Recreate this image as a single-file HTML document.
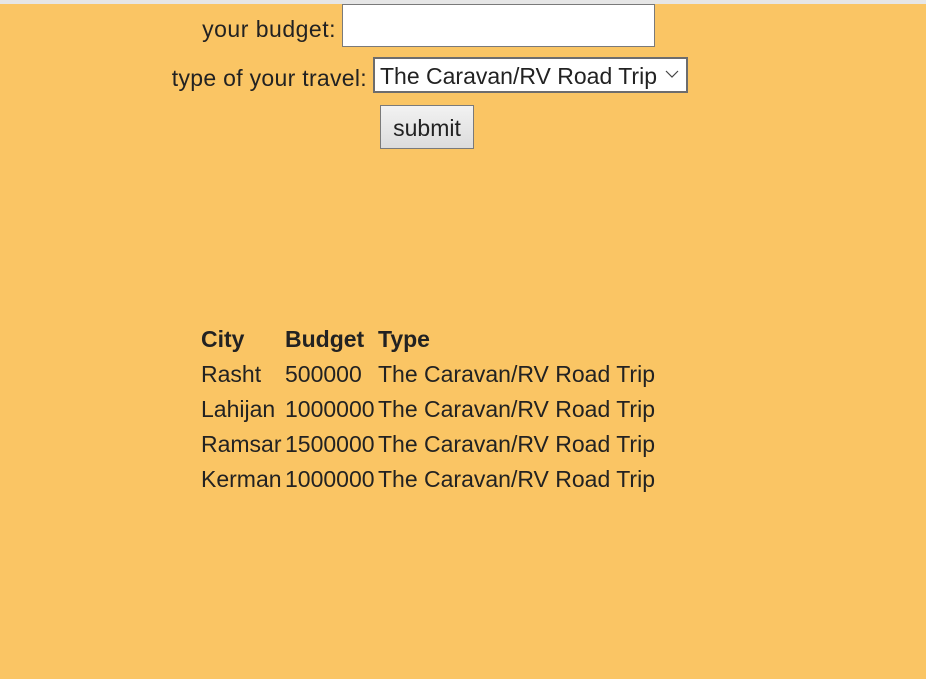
<!DOCTYPE html>
<html><head><style>
html,body{margin:0;padding:0}
body{width:926px;height:679px;background:#fac564;position:relative;overflow:hidden;font-family:"Liberation Sans",sans-serif;font-size:23px;color:#222}
.top{position:absolute;left:0;top:0;width:926px;height:4px;background:#e6e6e6}
.a{position:absolute;white-space:nowrap;line-height:24px}
.r{position:absolute;white-space:nowrap;line-height:24px;text-align:right}
.inp{position:absolute;left:342px;top:4px;width:311px;height:41px;background:#fff;border:1.5px solid #7a7a7a}
.sel{position:absolute;left:373px;top:57px;width:311px;height:32px;background:#fff;border:2px solid #6d6d6d}
.btn{position:absolute;left:380px;top:105px;width:92px;height:42px;border:1.5px solid #7a7a7a;background:linear-gradient(#f2f2f2,#dcdcdc);text-align:center;line-height:44px}
b{font-weight:bold}
</style></head><body>
<div class="top"></div>
<div class="r" style="right:590px;top:17px;letter-spacing:0.5px">your budget:</div>
<div class="inp"></div>
<div class="r" style="right:559px;top:66px;letter-spacing:0.3px">type of your travel:</div>
<div class="sel"><span class="a" style="left:5px;top:5px">The Caravan/RV Road Trip</span>
<svg style="position:absolute;left:290px;top:11px" width="14" height="9"><path d="M1 1 L7 7 L13 1" fill="none" stroke="#444" stroke-width="1.2"/></svg></div>
<div class="btn">submit</div>
<div class="a" style="left:201px;top:327px"><b>City</b></div>
<div class="a" style="left:285px;top:327px"><b>Budget</b></div>
<div class="a" style="left:378px;top:327px"><b>Type</b></div>
<div class="a" style="left:201px;top:362px">Rasht</div>
<div class="a" style="left:285px;top:362px">500000</div>
<div class="a" style="left:378px;top:362px">The Caravan/RV Road Trip</div>
<div class="a" style="left:201px;top:397px">Lahijan</div>
<div class="a" style="left:285px;top:397px">1000000</div>
<div class="a" style="left:378px;top:397px">The Caravan/RV Road Trip</div>
<div class="a" style="left:201px;top:432px">Ramsar</div>
<div class="a" style="left:285px;top:432px">1500000</div>
<div class="a" style="left:378px;top:432px">The Caravan/RV Road Trip</div>
<div class="a" style="left:201px;top:467px">Kerman</div>
<div class="a" style="left:285px;top:467px">1000000</div>
<div class="a" style="left:378px;top:467px">The Caravan/RV Road Trip</div>
</body></html>
